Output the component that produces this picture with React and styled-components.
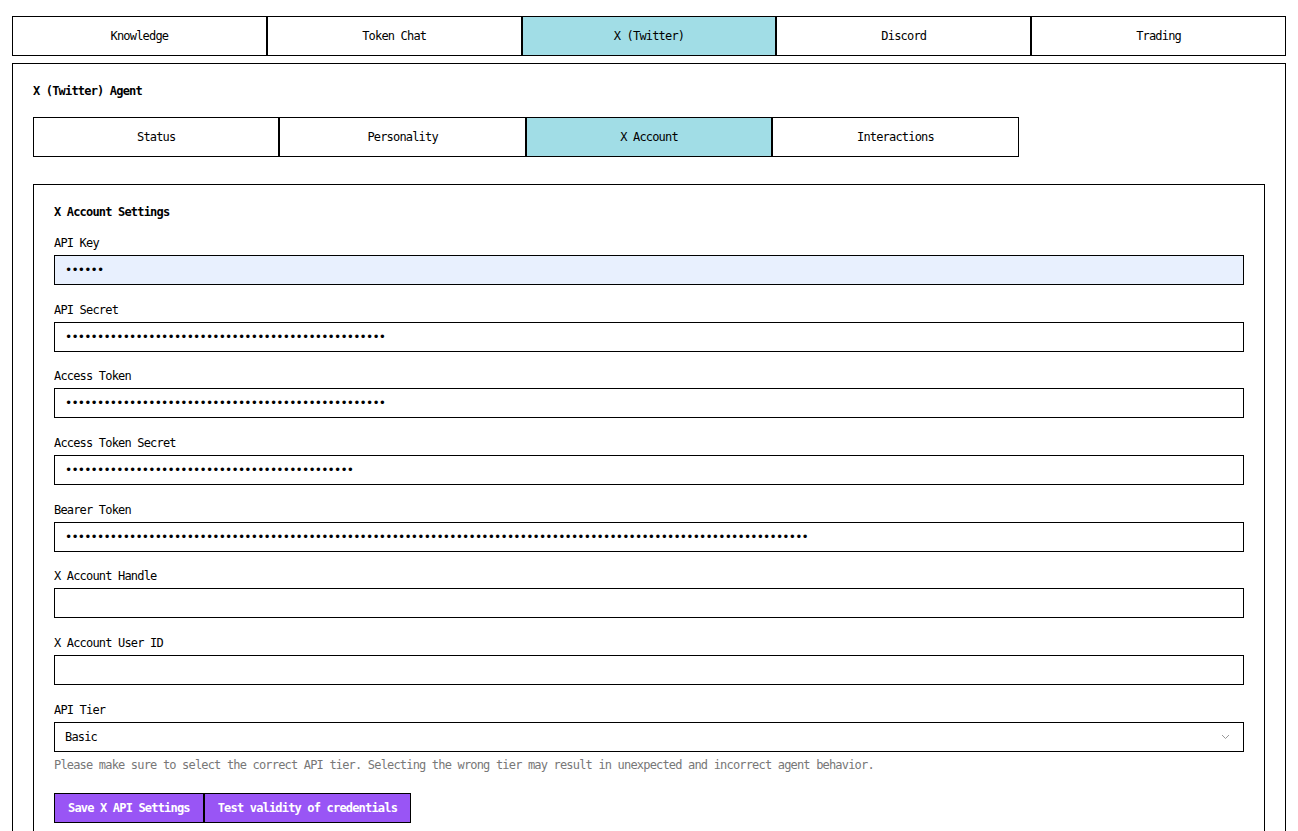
import React, { useState } from "react";
import styled, { createGlobalStyle } from "styled-components";

const GlobalStyle = createGlobalStyle`
  html, body {
    margin: 0;
    padding: 0;
    background: #ffffff;
  }

  body {
    font-family: "DejaVu Sans Mono", "Liberation Mono", monospace;
    font-size: 12px;
    letter-spacing: -0.82px;
    color: #000000;
  }

  * {
    box-sizing: border-box;
  }
`;

const Page = styled.div`
  padding: 16px 12px 0 12px;
`;

const TabBar = styled.div`
  display: flex;
  width: ${(p) => p.width || "100%"};
`;

const Tab = styled.button`
  flex: 1;
  height: 40px;
  border: 1px solid #000;
  background: ${(p) => (p.active ? "#a1dde6" : "#ffffff")};
  font-family: inherit;
  font-size: 12px;
  letter-spacing: -0.82px;
  color: #000;
  cursor: pointer;
  padding: 0;
`;

const Panel = styled.div`
  margin-top: 7px;
  border: 1px solid #000;
  border-bottom: 0;
  padding: 20px 20px 0 20px;
`;

const Title = styled.h2`
  margin: 0 0 19px 0;
  font-size: 12px;
  line-height: 14px;
  font-weight: bold;
`;

const Card = styled.div`
  margin-top: 27px;
  border: 1px solid #000;
  border-bottom: 0;
  padding: 20px 20px 30px 20px;
`;

const CardTitle = styled.h3`
  margin: 0 0 16px 0;
  font-size: 12px;
  line-height: 14px;
  font-weight: bold;
`;

const Fields = styled.div`
  display: flex;
  flex-direction: column;
  gap: 16.7px;
`;

const Field = styled.div`
  display: flex;
  flex-direction: column;
`;

const Label = styled.label`
  line-height: 16px;
  margin-bottom: 4px;
`;

const Input = styled.input`
  height: 30px;
  border: 1px solid #000;
  border-radius: 0;
  background: ${(p) => (p.filled ? "#e8f0fe" : "#ffffff")};
  padding: 0 10px;
  font-family: inherit;
  font-size: 12px;
  letter-spacing: -0.82px;
  color: #000;
  outline: none;
`;

const SelectWrap = styled.div`
  position: relative;
`;

const Select = styled.select`
  width: 100%;
  height: 30px;
  border: 1px solid #000;
  border-radius: 0;
  background: #fff;
  padding: 0 10px;
  font-family: inherit;
  font-size: 12px;
  letter-spacing: -0.82px;
  color: #000;
  appearance: none;
  outline: none;
`;

const Chevron = styled.svg`
  position: absolute;
  right: 14px;
  top: 12px;
  pointer-events: none;
`;

const Help = styled.p`
  margin: 6px 0 0 0;
  line-height: 14px;
  color: #777777;
`;

const Actions = styled.div`
  display: flex;
  margin-top: 21px;
`;

const Button = styled.button`
  height: 30px;
  border: 1px solid #000;
  background: #9955f5;
  color: #fff;
  padding: 0 13px;
  font-family: inherit;
  font-size: 12px;
  letter-spacing: -0.82px;
  font-weight: bold;
  cursor: pointer;
`;

const topTabs = ["Knowledge", "Token Chat", "X (Twitter)", "Discord", "Trading"];
const subTabs = ["Status", "Personality", "X Account", "Interactions"];

const fields = [
  { label: "API Key", value: "x".repeat(6), filled: true },
  { label: "API Secret", value: "x".repeat(50) },
  { label: "Access Token", value: "x".repeat(50) },
  { label: "Access Token Secret", value: "x".repeat(45) },
  { label: "Bearer Token", value: "x".repeat(116) },
  { label: "X Account Handle", value: "", text: true },
  { label: "X Account User ID", value: "", text: true },
];

export default function App() {
  const [top, setTop] = useState("X (Twitter)");
  const [sub, setSub] = useState("X Account");

  return (
    <Page>
      <GlobalStyle />
      <TabBar>
        {topTabs.map((t) => (
          <Tab key={t} active={t === top} onClick={() => setTop(t)}>
            {t}
          </Tab>
        ))}
      </TabBar>

      <Panel>
        <Title>X (Twitter) Agent</Title>
        <TabBar width="80%">
          {subTabs.map((t) => (
            <Tab key={t} active={t === sub} onClick={() => setSub(t)}>
              {t}
            </Tab>
          ))}
        </TabBar>

        <Card>
          <CardTitle>X Account Settings</CardTitle>
          <Fields>
            {fields.map((f) => (
              <Field key={f.label}>
                <Label>{f.label}</Label>
                <Input
                  type={f.text ? "text" : "password"}
                  defaultValue={f.value}
                  filled={f.filled}
                />
              </Field>
            ))}
            <Field>
              <Label>API Tier</Label>
              <SelectWrap>
                <Select defaultValue="Basic">
                  <option>Free</option>
                  <option>Basic</option>
                  <option>Pro</option>
                </Select>
                <Chevron width="9" height="6" viewBox="0 0 9 6">
                  <path d="M1 1l3.5 3.5L8 1" fill="none" stroke="#999" strokeWidth="1" />
                </Chevron>
              </SelectWrap>
              <Help>
                Please make sure to select the correct API tier. Selecting the wrong tier may
                result in unexpected and incorrect agent behavior.
              </Help>
            </Field>
          </Fields>
          <Actions>
            <Button>Save X API Settings</Button>
            <Button>Test validity of credentials</Button>
          </Actions>
        </Card>
      </Panel>
    </Page>
  );
}
